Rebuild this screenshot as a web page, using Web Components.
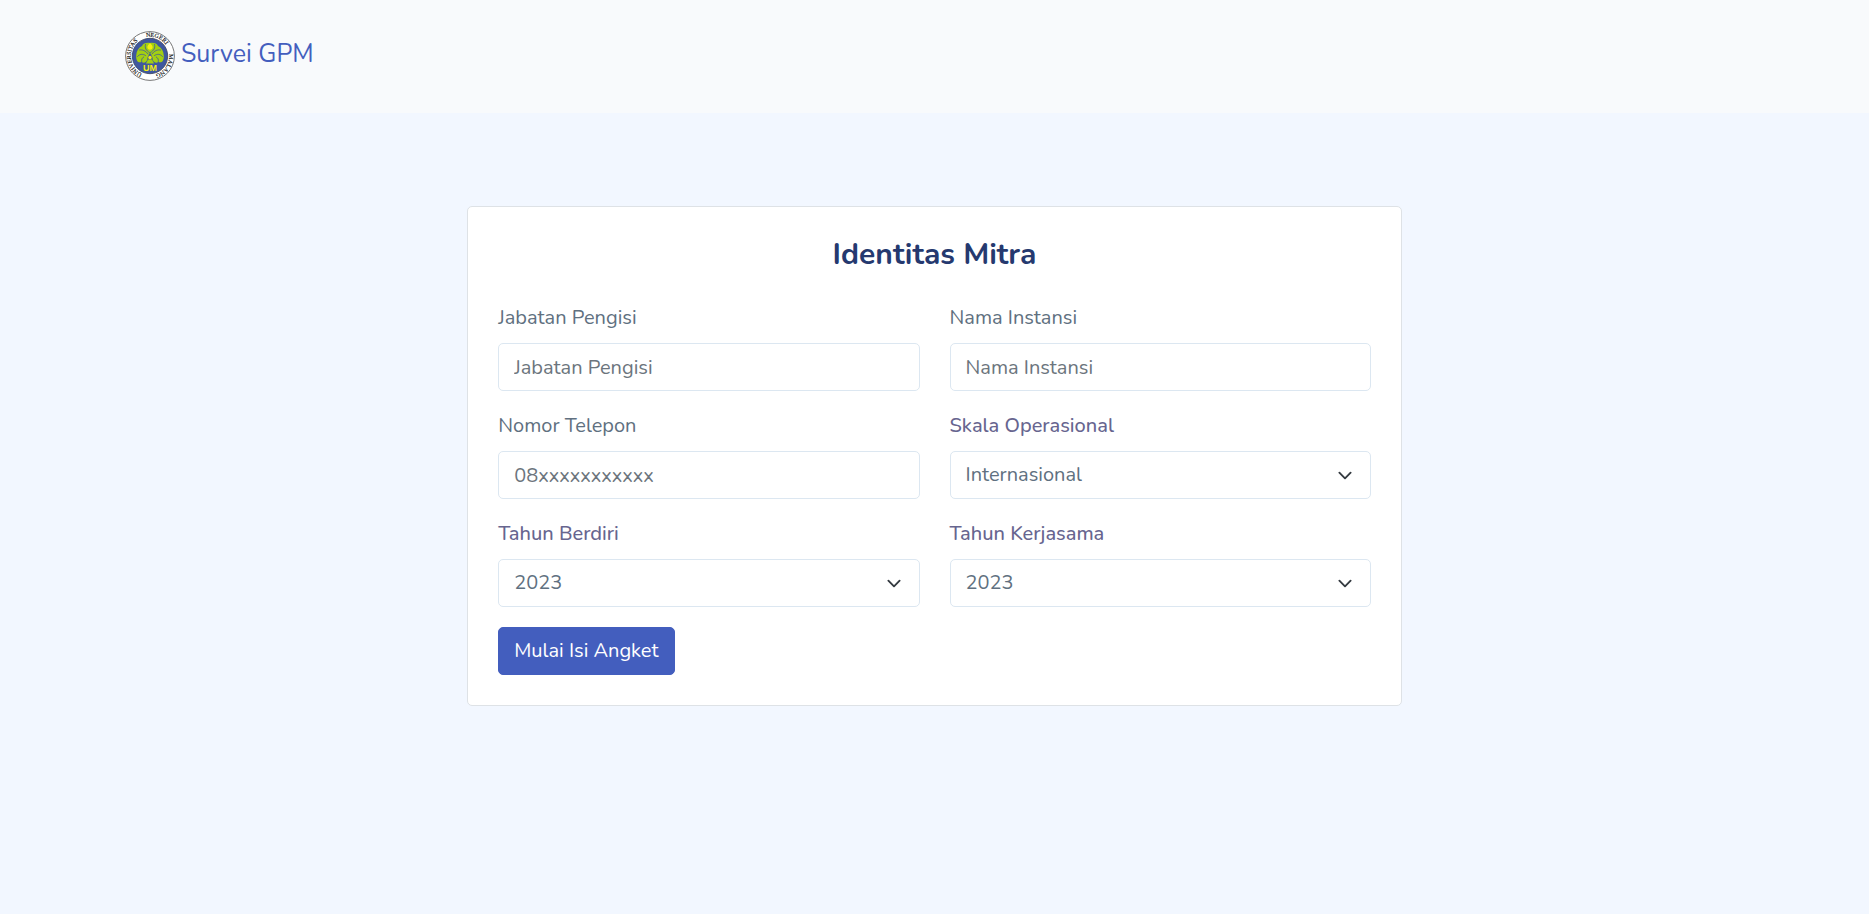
<!DOCTYPE html>
<html lang="id">
<head>
<meta charset="utf-8">
<meta name="viewport" content="width=device-width, initial-scale=1">
<title>Survei GPM</title>
<style>
  body {
    margin: 0;
    min-height: 100vh;
    background: #f2f7ff;
    color: #607080;
    font: 400 20px/30px Nunito, Lato, "Open Sans", sans-serif;
  }
</style>
</head>
<body>
<site-header>Survei GPM</site-header>
<survey-card heading="Identitas Mitra">
  <survey-field label="Jabatan Pengisi" name="jabatan" placeholder="Jabatan Pengisi"></survey-field>
  <survey-field label="Nama Instansi" name="instansi" placeholder="Nama Instansi"></survey-field>
  <survey-field label="Nomor Telepon" name="telepon" type="tel" placeholder="08xxxxxxxxxxx"></survey-field>
  <survey-select label="Skala Operasional" name="skala" options="Internasional,Nasional,Lokal"></survey-select>
  <survey-select label="Tahun Berdiri" name="berdiri" options="2023,2022,2021,2020"></survey-select>
  <survey-select label="Tahun Kerjasama" name="kerjasama" options="2023,2022,2021,2020"></survey-select>
  <survey-button slot="action">Mulai Isi Angket</survey-button>
</survey-card>

<template id="logo-tpl">
  <style>
    :host { display: inline-block; width: 50px; height: 50px; vertical-align: middle; }
    svg { display: block; width: 100%; height: 100%; }
    .ring { font: 6px "Liberation Serif", serif; fill: #111; stroke: #111; stroke-width: .15; }
    .mono { font: bold 9px "Liberation Sans", sans-serif; fill: #f4ee12; }
  </style>
  <svg viewBox="0 0 50 50" role="img" aria-label="Universitas Negeri Malang">
    <circle cx="25" cy="25" r="24.4" fill="#fff" stroke="#777" stroke-width="1"/>
    <circle cx="25" cy="25" r="17.700" fill="#3f589f" stroke="#39415c" stroke-width=".8"/>
    <path id="arc" d="M25 44.200A19.200 19.200 0 0 1 25 5.800A19.200 19.200 0 0 1 25 44.200" fill="none"/>
    <g class="ring">
      <text><textPath href="#arc" startOffset="8">UNIVERSITAS</textPath></text>
      <text><textPath href="#arc" startOffset="56">NEGERI</textPath></text>
      <text><textPath href="#arc" startOffset="88">MALANG</textPath></text>
    </g>
    <g fill="#a3cf12">
      <path d="M25 12c-4-.6-7 .6-8 3c-3.500 1.500-5.500 5-5.800 9.500c-.2 2 .2 4 1 5.500c1 1.600 3 1.700 4.500.8c1 1.200 2.800 1.300 4 .2c1.200-1 1.800-2.500 1.800-4.500l2.500-5l2.500 5c0 2 .6 3.500 1.800 4.500c1.200 1.100 3 1 4-.2c1.500.9 3.500.8 4.500-.8c.8-1.500 1.200-3.500 1-5.500c-.3-4.500-2.300-8-5.800-9.500c-1-2.400-4-3.600-8-3z"/>
    </g>
    <g fill="none" stroke="#3f589f" stroke-width=".8" stroke-linecap="round">
      <path d="M20.500 13.500c-1 3.500.5 6 4 8M29.500 13.500c1 3.500-.5 6-4 8"/>
      <path d="M14.500 19c3-.5 6 .5 8.500 4M35.500 19c-3-.5-6 .5-8.500 4"/>
      <path d="M12.500 25.500c2-2.500 5-3 8-1M37.500 25.500c-2-2.500-5-3-8-1"/>
      <path d="M16.700 30.500c-.5-2 .3-3.500 2-4.500M33.300 30.500c.5-2-.3-3.500-2-4.500"/>
    </g>
    <path d="M25 12c-1.700 1.600-2.600 2.800-2.600 4.300c0 1.500 1.100 2.400 2.600 2.400s2.600-.9 2.600-2.400c0-1.500-.9-2.700-2.600-4.300z" fill="#f4ee12"/>
    <path d="M23 28.500h4l2 4h-8z" fill="#a3cf12"/>
    <circle cx="25" cy="26.500" r="1.700" fill="#f4ee12"/>
    <text class="mono" x="25" y="40" text-anchor="middle">UM</text>
  </svg>
</template>

<template id="header-tpl">
  <style>
    :host { display: block; background: #f8fafc; padding: 31px 0 32px; }
    nav { box-sizing: border-box; max-width: 1650px; margin: 0 auto; padding: 0 15px; }
    a { display: block; width: fit-content; color: #435ebe; font-size: 25px; text-decoration: none; }
  </style>
  <nav><a href="#"><um-logo></um-logo> <slot></slot></a></nav>
</template>

<template id="card-tpl">
  <style>
    :host { display: block; padding: 93px 0; }
    form {
      box-sizing: border-box; width: 50%; min-width: min(100%, 600px); margin: 0 auto;
      padding: 30px; background: #fff; border: 1px solid #dee2e6; border-radius: 5px;
    }
    h1 { margin: 0 0 30px; color: #25396f; font-size: 30px; line-height: 36px; font-weight: 700; text-align: center; }
    .fields { display: grid; grid-template-columns: 1fr 1fr; gap: 20px 30px; margin-bottom: 20px; }
  </style>
  <form>
    <h1></h1>
    <div class="fields"><slot></slot></div>
    <slot name="action"></slot>
  </form>
</template>

<template id="field-tpl">
  <style>
    :host { display: block; }
    label { display: block; margin-bottom: 10px; }
    input {
      display: block; box-sizing: border-box; width: 100%; height: 48px; padding: 0 15px;
      font: inherit; color: #607080; background: #fff; border: 1px solid #dce7f1; border-radius: 5px;
    }
    input::placeholder { color: #6c757d; opacity: 1; }
  </style>
  <label for="control"></label>
  <input id="control">
</template>

<template id="select-tpl">
  <style>
    :host { display: block; }
    label { display: block; margin-bottom: 10px; color: #67658f; font-weight: 500; }
    select {
      display: block; box-sizing: border-box; width: 100%; height: 48px; padding: 0 45px 0 15px;
      appearance: none; font: inherit; color: #607080; border: 1px solid #dce7f1; border-radius: 5px;
      background: #fff url("data:image/svg+xml,%3Csvg xmlns='http://www.w3.org/2000/svg' viewBox='0 0 16 16'%3E%3Cpath fill='none' stroke='%23343a40' stroke-linecap='round' stroke-linejoin='round' stroke-width='2' d='M2 5l6 6 6-6'/%3E%3C/svg%3E") no-repeat right 15px center / 20px 15px;
    }
  </style>
  <label for="control"></label>
  <select id="control"></select>
</template>

<template id="button-tpl">
  <style>
    :host { display: block; }
    button {
      display: block; height: 48px; padding: 0 15px; font: inherit; color: #fff;
      background: #435ebe; border: 1px solid #435ebe; border-radius: 5px; cursor: pointer;
    }
  </style>
  <button type="button"><slot></slot></button>
</template>

<script>
  class Templated extends HTMLElement {
    constructor() {
      super();
      const tpl = document.getElementById(this.constructor.template);
      this.attachShadow({ mode: "open" }).append(tpl.content.cloneNode(true));
    }
    find(selector) { return this.shadowRoot.querySelector(selector); }
  }

  class UmLogo extends Templated { static template = "logo-tpl"; }
  class SiteHeader extends Templated { static template = "header-tpl"; }
  class SurveyButton extends Templated { static template = "button-tpl"; }

  class SurveyCard extends Templated {
    static template = "card-tpl";
    connectedCallback() { this.find("h1").textContent = this.getAttribute("heading"); }
  }

  class SurveyField extends Templated {
    static template = "field-tpl";
    connectedCallback() {
      this.find("label").textContent = this.getAttribute("label");
      const input = this.find("input");
      input.type = this.getAttribute("type") || "text";
      input.name = this.getAttribute("name");
      input.placeholder = this.getAttribute("placeholder");
    }
  }

  class SurveySelect extends Templated {
    static template = "select-tpl";
    connectedCallback() {
      this.find("label").textContent = this.getAttribute("label");
      const select = this.find("select");
      select.name = this.getAttribute("name");
      select.replaceChildren(...this.getAttribute("options").split(",").map(text => new Option(text)));
    }
  }

  customElements.define("um-logo", UmLogo);
  customElements.define("site-header", SiteHeader);
  customElements.define("survey-card", SurveyCard);
  customElements.define("survey-field", SurveyField);
  customElements.define("survey-select", SurveySelect);
  customElements.define("survey-button", SurveyButton);
</script>
</body>
</html>
